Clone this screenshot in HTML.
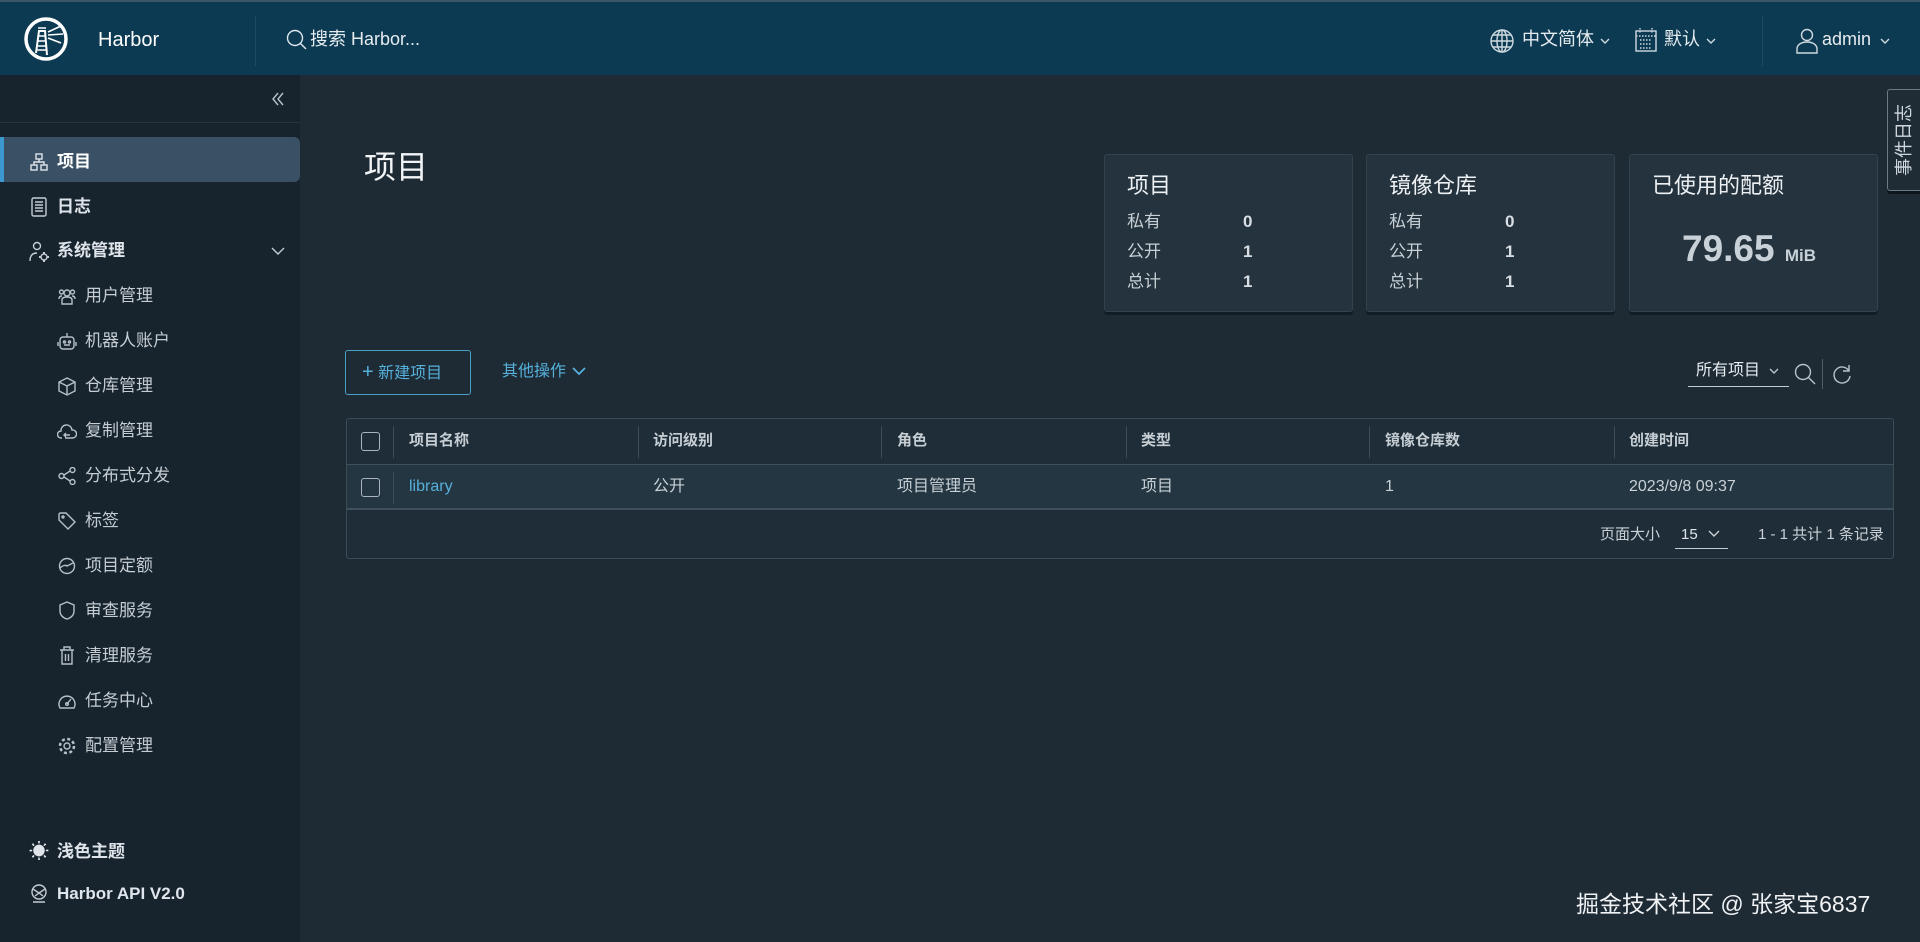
<!DOCTYPE html>
<html><head><meta charset="utf-8"><style>
*{margin:0;padding:0;box-sizing:border-box}
body{width:1920px;height:942px;overflow:hidden;background:#1e2b35;font-family:"Liberation Sans","Noto Sans CJK SC",sans-serif;color:#dfe5ea;position:relative}
.a{position:absolute;white-space:nowrap;line-height:22px}
svg{position:absolute;fill:none;stroke:currentColor;stroke-width:1.4}
#hdr{position:absolute;left:0;top:0;width:1920px;height:75px;background:#0c3a52;border-top:2px solid #3d5566}
#side{position:absolute;left:0;top:75px;width:300px;height:867px;background:#17232d}
.si{font-size:17px;color:#c5cdd3}
.sb{font-size:17px;font-weight:bold;color:#dfe5ea}
.card{position:absolute;top:154px;width:249px;height:158px;background:#24333e;border:1px solid #33434e;border-radius:3px;box-shadow:0 3px 0 #121c24}
.card .t{position:absolute;left:22px;top:17px;font-size:22px;line-height:28px;color:#eef1f3}
.card .r{position:absolute;left:22px;font-size:17px;line-height:22px;color:#c8d0d6}
.card .v{position:absolute;left:138px;font-size:17px;line-height:22px;font-weight:bold;color:#d8dee3}
.th{font-size:15px;font-weight:bold;color:#c6ced4}
.td{font-size:16px;color:#c9d1d7}
.vl{position:absolute;width:1px;background:#3c4c57}
.cb{position:absolute;width:19px;height:19px;border:1.5px solid #a9b4bc;border-radius:3px}
#items{position:absolute;left:0;top:3px;width:300px;height:939px}
</style></head><body>
<div id="hdr">
 <svg style="left:23px;top:14px" width="46" height="46" viewBox="0 0 46 46"><circle cx="23" cy="23" r="20" stroke="#fff" stroke-width="3.5"/><path d="M13 37 L16 15 L22 15 L24 39" stroke="#fff" stroke-width="2"/><path d="M15 12 h8 M16 20 h6 M15.5 25 h7 M15 30 h8 M14.5 34 h9" stroke="#fff" stroke-width="1.6"/><path d="M25 16 L38 10 M25 19 L40 18 M25 22 L38 27" stroke="#fff" stroke-width="1.6"/></svg>
 <div class="a" style="left:98px;top:27px;font-size:20px;color:#fff">Harbor</div>
 <div class="a" style="left:255px;top:14px;width:1px;height:50px;background:#1d4b62"></div>
 <svg style="left:285px;top:26px;color:#dfe8ee" width="24" height="24" viewBox="0 0 24 24"><circle cx="10" cy="10" r="7.5"/><path d="M15.5 15.5 L21 21"/></svg>
 <div class="a" style="left:310px;top:26px;font-size:18px;color:#e6ecf0">搜索 Harbor...</div>
 <svg style="left:1489px;top:26px;color:#cfd9e0" width="26" height="26" viewBox="0 0 26 26"><circle cx="13" cy="13" r="11"/><ellipse cx="13" cy="13" rx="5" ry="11"/><path d="M2 13h22M4 7h18M4 19h18M13 2v22"/></svg>
 <div class="a" style="left:1522px;top:26px;font-size:18px;color:#e6ecf0">中文简体</div>
 <svg style="left:1600px;top:35px;color:#cfd9e0" width="10" height="8" viewBox="0 0 10 8"><path d="M1 2l4 4 4-4"/></svg>
 <svg style="left:1634px;top:25px;color:#cfd9e0" width="24" height="26" viewBox="0 0 24 26"><rect x="2" y="4" width="20" height="20"/><path d="M6 1v6M18 1v6M2 9h20M6 13h12M6 17h12M6 21h12" stroke-dasharray="1.5 1.5"/></svg>
 <div class="a" style="left:1664px;top:26px;font-size:18px;color:#e6ecf0">默认</div>
 <svg style="left:1706px;top:35px;color:#cfd9e0" width="10" height="8" viewBox="0 0 10 8"><path d="M1 2l4 4 4-4"/></svg>
 <div class="a" style="left:1762px;top:14px;width:1px;height:50px;background:#1d4b62"></div>
 <svg style="left:1795px;top:25px;color:#cfd9e0" width="24" height="28" viewBox="0 0 24 28"><circle cx="12" cy="8" r="5.5"/><path d="M2 26v-4c0-4 4-7 10-7s10 3 10 7v4z"/></svg>
 <div class="a" style="left:1822px;top:26px;font-size:18px;color:#e6ecf0">admin</div>
 <svg style="left:1880px;top:35px;color:#cfd9e0" width="10" height="8" viewBox="0 0 10 8"><path d="M1 2l4 4 4-4"/></svg>
</div>

<div id="side">
 <svg style="left:270px;top:16px;color:#b7c2ca" width="16" height="16" viewBox="0 0 16 16"><path d="M8 2L3 8l5 6M13 2L8 8l5 6"/></svg>
 <div class="a" style="left:0;top:47px;width:300px;height:1px;background:#26343e"></div>
 <div class="a" style="left:0;top:62px;width:300px;height:45px;background:#3a5165;border-radius:0 6px 6px 0"></div>
 <div class="a" style="left:0;top:62px;width:4px;height:45px;background:#3b99d0"></div>
</div>
<div id="items">
<svg style="left:30px;top:150px;color:#dfe5ea" width="18" height="18" viewBox="0 0 18 18"><rect x="6" y="1" width="6" height="5"/><rect x="1" y="12" width="6" height="5"/><rect x="11" y="12" width="6" height="5"/><path d="M9 6v3M4 12V9h10v3"/></svg>
<div class="a sb" style="left:57px;top:148px;color:#fff">项目</div>
<svg style="left:31px;top:194px;color:#c5cdd3" width="16" height="20" viewBox="0 0 16 20"><rect x="1" y="1" width="14" height="18" rx="1.5"/><path d="M4 5h8M4 8h8M4 11h8M4 14h8"/></svg>
<div class="a sb" style="left:57px;top:193px">日志</div>
<svg style="left:29px;top:238px;color:#c5cdd3" width="22" height="22" viewBox="0 0 22 22"><circle cx="8" cy="5" r="3.5"/><path d="M1 20c0-6 3-8 7-8"/><circle cx="15" cy="16" r="3"/><path d="M15 11v2M15 19v2M10 16h2M18 16h2" stroke-width="2"/></svg>
<div class="a sb" style="left:57px;top:237px">系统管理</div>
<svg style="left:270px;top:243px;color:#c5cdd3" width="16" height="10" viewBox="0 0 16 10"><path d="M2 2l6 6 6-6"/></svg>

<div class="a si" style="left:85px;top:282px">用户管理</div>
<div class="a si" style="left:85px;top:327px">机器人账户</div>
<div class="a si" style="left:85px;top:372px">仓库管理</div>
<div class="a si" style="left:85px;top:417px">复制管理</div>
<div class="a si" style="left:85px;top:462px">分布式分发</div>
<div class="a si" style="left:85px;top:507px">标签</div>
<div class="a si" style="left:85px;top:552px">项目定额</div>
<div class="a si" style="left:85px;top:597px">审查服务</div>
<div class="a si" style="left:85px;top:642px">清理服务</div>
<div class="a si" style="left:85px;top:687px">任务中心</div>
<div class="a si" style="left:85px;top:732px">配置管理</div>
<svg style="left:58px;top:284px;color:#b7c0c7" width="18" height="18" viewBox="0 0 18 18"><circle cx="9" cy="6" r="3"/><circle cx="3.5" cy="5" r="2"/><circle cx="14.5" cy="5" r="2"/><path d="M4 17v-4c0-2 2-3 5-3s5 1 5 3v4zM1 12c0-2 1-3 3-3M17 12c0-2-1-3-3-3"/></svg>
<svg style="left:57px;top:329px;color:#b7c0c7" width="20" height="19" viewBox="0 0 20 19"><rect x="3" y="5" width="14" height="12" rx="3"/><path d="M10 1v4M1 10v4M19 10v4M7 13h6"/><circle cx="7.5" cy="10" r="1"/><circle cx="12.5" cy="10" r="1"/></svg>
<svg style="left:58px;top:374px;color:#b7c0c7" width="18" height="19" viewBox="0 0 18 19"><path d="M9 1l8 4v9l-8 4-8-4V5zM1 5l8 4 8-4M9 9v9"/></svg>
<svg style="left:57px;top:420px;color:#b7c0c7" width="20" height="16" viewBox="0 0 20 16"><path d="M5 15H4a3.5 3.5 0 0 1 0-7 5.5 5.5 0 0 1 11-1 4 4 0 0 1 1 8H8M9 10l-2 2 2 2M7 12h6"/></svg>
<svg style="left:58px;top:464px;color:#b7c0c7" width="18" height="18" viewBox="0 0 18 18"><circle cx="3.5" cy="9" r="2.5"/><circle cx="14.5" cy="3" r="2.5"/><circle cx="14.5" cy="15" r="2.5"/><path d="M6 8l6-4M6 10l6 4"/></svg>
<svg style="left:58px;top:509px;color:#b7c0c7" width="18" height="18" viewBox="0 0 18 18"><path d="M1 2v6l9 9 7-7-9-9H2z"/><circle cx="5" cy="5" r="1"/></svg>
<svg style="left:58px;top:554px;color:#b7c0c7" width="18" height="18" viewBox="0 0 18 18"><circle cx="9" cy="9" r="7.5"/><path d="M2 11c3-3 6-3 7-2l6-3"/></svg>
<svg style="left:59px;top:598px;color:#b7c0c7" width="16" height="19" viewBox="0 0 16 19"><path d="M8 1l7 3v6c0 4-3 7-7 8-4-1-7-4-7-8V4z"/></svg>
<svg style="left:59px;top:643px;color:#b7c0c7" width="16" height="19" viewBox="0 0 16 19"><path d="M1 4h14M5 4V1h6v3M3 4v14h10V4M6.5 8v7M9.5 8v7"/></svg>
<svg style="left:57px;top:689px;color:#b7c0c7" width="20" height="18" viewBox="0 0 20 18"><path d="M3 16a8 8 0 1 1 14 0zM10 12l4-5"/><circle cx="10" cy="12" r="1.3"/></svg>
<svg style="left:58px;top:734px;color:#b7c0c7" width="18" height="18" viewBox="0 0 18 18"><circle cx="9" cy="9" r="3"/><circle cx="9" cy="9" r="7" stroke-dasharray="3 2.5" stroke-width="2.5"/></svg>

<div class="a" style="left:29px;top:838px;font-size:20px;color:#dfe5ea">☀</div>
<div class="a sb" style="left:57px;top:838px">浅色主题</div>
<svg style="left:31px;top:881px;color:#c5cdd3" width="16" height="19" viewBox="0 0 16 19"><circle cx="8" cy="8" r="7"/><path d="M2 5l6 4 6-4M4 12l4-3 4 3M2 18h12"/></svg>
<div class="a sb" style="left:57px;top:880px">Harbor API V2.0</div>
</div>

<div class="a" style="left:364px;top:147px;font-size:32px;line-height:40px;color:#f2f4f6">项目</div>

<div class="card" style="left:1104px"><div class="t">项目</div>
 <div class="r" style="top:56px">私有</div><div class="v" style="top:56px">0</div>
 <div class="r" style="top:86px">公开</div><div class="v" style="top:86px">1</div>
 <div class="r" style="top:116px">总计</div><div class="v" style="top:116px">1</div></div>
<div class="card" style="left:1366px"><div class="t">镜像仓库</div>
 <div class="r" style="top:56px">私有</div><div class="v" style="top:56px">0</div>
 <div class="r" style="top:86px">公开</div><div class="v" style="top:86px">1</div>
 <div class="r" style="top:116px">总计</div><div class="v" style="top:116px">1</div></div>
<div class="card" style="left:1629px"><div class="t">已使用的配额</div>
 <div class="a" style="left:52px;top:72px;font-size:37px;line-height:44px;font-weight:bold;color:#c8d1d8">79.65 <span style="font-size:17px">MiB</span></div></div>

<div class="a" style="left:1887px;top:89px;width:33px;height:102px;background:#1f2c36;border:1px solid #6b7a85;border-right:none;border-radius:3px 0 0 3px;box-shadow:0 3px 0 #0e161c"></div>
<div class="a" style="left:1868px;top:129px;width:72px;text-align:center;font-size:18px;color:#cfd7dd;transform:rotate(-90deg)">事件日志</div>

<div class="a" style="left:345px;top:350px;width:126px;height:45px;border:1px solid #4a9fc4;border-radius:3px"></div>
<div class="a" style="left:362px;top:361px;font-size:16px;color:#55b0da"><span style="font-size:20px;font-weight:300">+</span> 新建项目</div>
<div class="a" style="left:502px;top:361px;font-size:16px;color:#55b0da">其他操作</div>
<svg style="left:572px;top:366px;color:#55b0da" width="14" height="10" viewBox="0 0 14 10"><path d="M1 2l6 6 6-6" stroke-width="1.8"/></svg>

<div class="a" style="left:1696px;top:360px;font-size:16px;color:#e6ecf0">所有项目</div>
<svg style="left:1769px;top:367px;color:#b7c2ca" width="10" height="8" viewBox="0 0 10 8"><path d="M1 2l4 4 4-4"/></svg>
<div class="a" style="left:1688px;top:386px;width:101px;height:1px;background:#c5cdd3"></div>
<svg style="left:1793px;top:362px;color:#b7c2ca" width="24" height="24" viewBox="0 0 24 24"><circle cx="10" cy="10" r="7.5"/><path d="M15.5 15.5L22 22"/></svg>
<div class="a" style="left:1822px;top:359px;width:1px;height:30px;background:#4e5e69"></div>
<svg style="left:1832px;top:363px;color:#b7c2ca" width="20" height="22" viewBox="0 0 20 22"><path d="M17 8A8 8 0 1 0 18 13M17 2v6h-6"/></svg>

<div class="a" style="left:346px;top:418px;width:1548px;height:141px;border:1px solid #3c4c57;border-radius:3px;background:#1f2d38"></div>
<div class="a" style="left:347px;top:464px;width:1546px;height:46px;background:#243641;border-top:1px solid #3e505c;border-bottom:2px solid #3e505c"></div>
<div class="cb" style="left:361px;top:432px"></div>
<div class="cb" style="left:361px;top:478px"></div>
<div class="vl" style="left:393px;top:426px;height:32px"></div>
<div class="vl" style="left:393px;top:472px;height:32px"></div>
<div class="vl" style="left:638px;top:426px;height:32px"></div>
<div class="vl" style="left:881px;top:426px;height:32px"></div>
<div class="vl" style="left:1126px;top:426px;height:32px"></div>
<div class="vl" style="left:1369px;top:426px;height:32px"></div>
<div class="vl" style="left:1614px;top:426px;height:32px"></div>
<div class="a th" style="left:409px;top:430px">项目名称</div>
<div class="a th" style="left:653px;top:430px">访问级别</div>
<div class="a th" style="left:897px;top:430px">角色</div>
<div class="a th" style="left:1141px;top:430px">类型</div>
<div class="a th" style="left:1385px;top:430px">镜像仓库数</div>
<div class="a th" style="left:1629px;top:430px">创建时间</div>
<div class="a td" style="left:409px;top:476px;color:#55b0da">library</div>
<div class="a td" style="left:653px;top:476px">公开</div>
<div class="a td" style="left:897px;top:476px">项目管理员</div>
<div class="a td" style="left:1141px;top:476px">项目</div>
<div class="a td" style="left:1385px;top:476px">1</div>
<div class="a td" style="left:1629px;top:476px">2023/9/8 09:37</div>
<div class="a" style="left:1600px;top:524px;font-size:15px;color:#c9d1d7">页面大小</div>
<div class="a" style="left:1681px;top:524px;font-size:15px;color:#dfe5ea">15</div>
<svg style="left:1708px;top:530px;color:#c9d1d7" width="12" height="8" viewBox="0 0 12 8"><path d="M1 1l5 5 5-5"/></svg>
<div class="a" style="left:1675px;top:548px;width:53px;height:1px;background:#c5cdd3"></div>
<div class="a" style="left:1758px;top:524px;font-size:15px;color:#c9d1d7">1 - 1 共计 1 条记录</div>

<div class="a" style="left:1576px;top:890px;font-size:23px;line-height:28px;color:#f0f2f4">掘金技术社区 @ 张家宝6837</div>
</body></html>
